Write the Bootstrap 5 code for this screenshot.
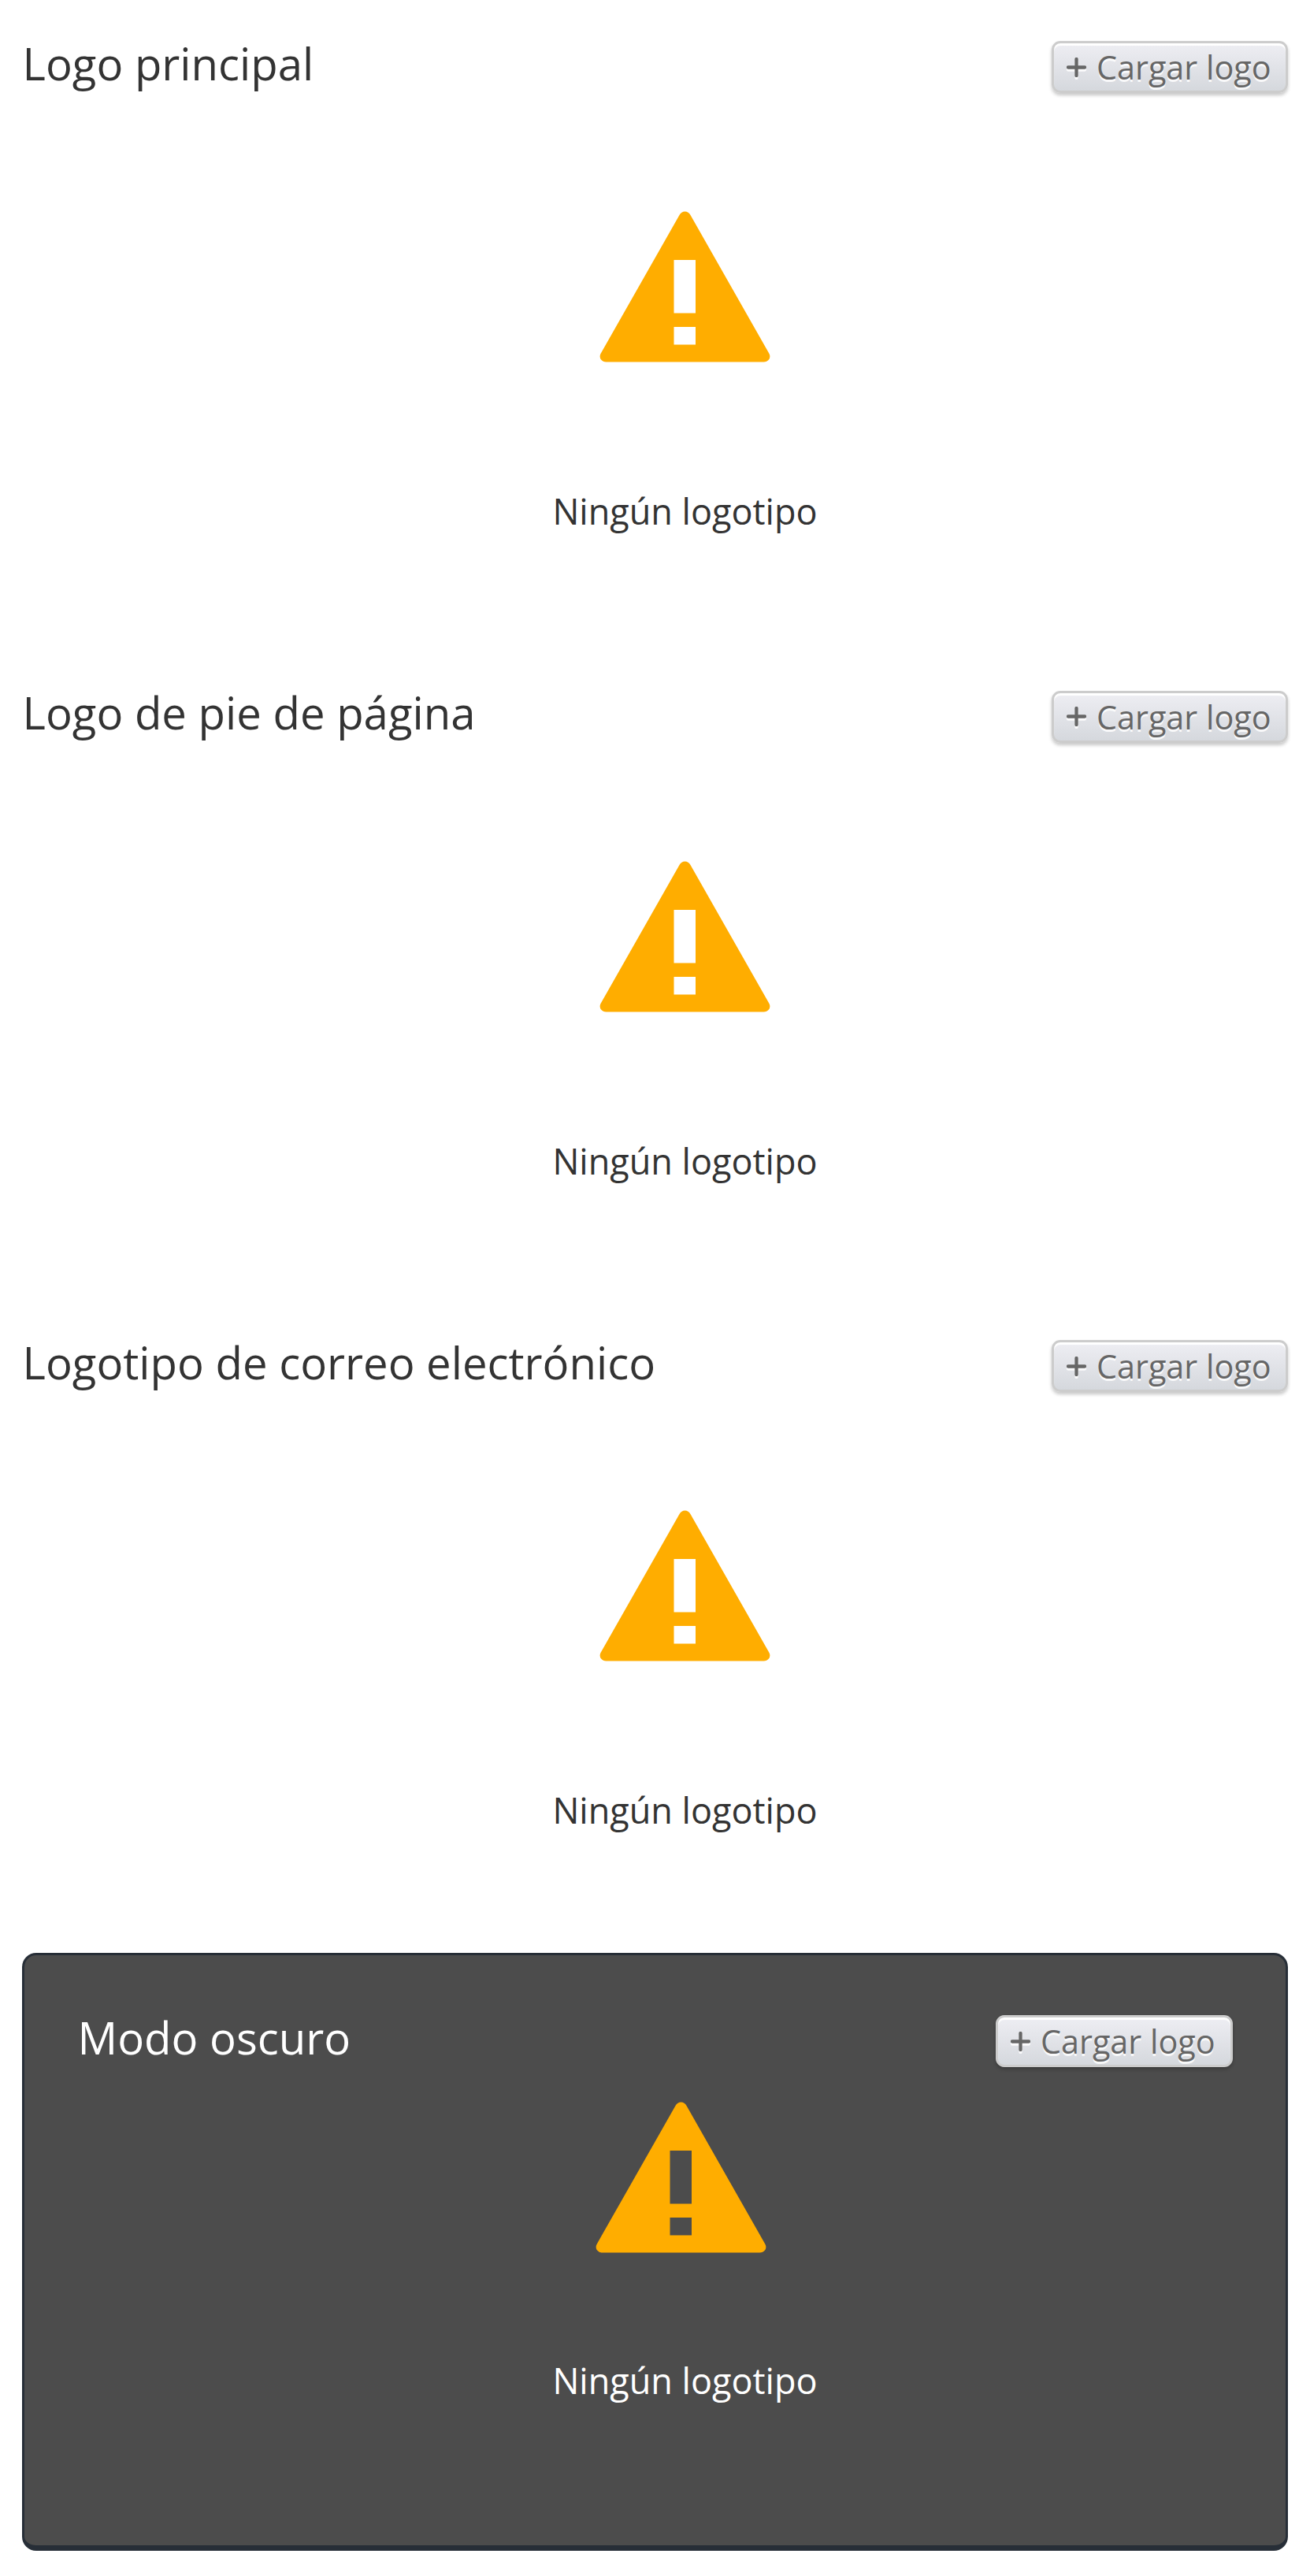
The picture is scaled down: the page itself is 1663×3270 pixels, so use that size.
<!DOCTYPE html>
<html lang="es">
<head>
<meta charset="utf-8">
<meta name="viewport" content="width=device-width, initial-scale=1">
<title>Logotipos</title>
<link href="https://cdn.jsdelivr.net/npm/bootstrap@5.3.0/dist/css/bootstrap.min.css" rel="stylesheet">
<style>
  body { font-family: "Open Sans", sans-serif; color: #333; background: #fff; }
  .logo-page { padding: 0 28px 32px; }
  .logo-section { height: 824.5px; padding-top: 46px; }
  .logo-section:nth-of-type(3) { height: 830px; }
  .logo-title { font-size: 56.3px; line-height: 66px; font-weight: 400; margin-top: .6px; padding-left: .6px; }
  .btn-load {
    height: 66px; width: 300px; margin-top: 6px; padding: 0 0 0 16px;
    border: 3px solid #ccc; border-radius: 11px;
    background: linear-gradient(#eeeef3, #d5d8dd);
    box-shadow: inset 0 3px 1px #fff, 0 3px 4px rgba(0, 0, 0, .22);
    color: #666; font-size: 41.35px; line-height: 60px; text-shadow: 0 3px 0 rgba(255, 255, 255, .85);
  }
  .btn-load svg { width: 25px; height: 25px; margin-right: 13px; filter: drop-shadow(0 3px 0 rgba(255, 255, 255, .85)); }
  .logo-empty { padding: 150px 0 0 76px; }
  .logo-empty svg { width: 217px; height: 192px; }
  .logo-caption { font-size: 45px; line-height: 60px; margin-top: 159px; }
  .dark-panel {
    height: 759px; padding: 70px 67px 0; background: #4c4c4c; color: #fff;
    border: 3px solid #272e37; border-bottom-width: 7px; border-radius: 18px;
  }
  .dark-panel .btn-load { width: 301px; }
  .dark-panel .logo-empty { padding: 44px 0 0 76px; }
  .dark-panel .logo-empty svg { margin-right: 10px; }
  .dark-panel .logo-caption { margin-top: 132px; }
</style>
</head>
<body>
<svg class="d-none" xmlns="http://www.w3.org/2000/svg">
  <symbol id="warning" viewBox="0 0 217 192">
    <path fill="#ffad00" fill-rule="evenodd" d="M101.500 5Q104 .5 108.500 .5Q113 .5 115.500 5L215.500 181Q217.500 185 215 188.500Q212.500 191.500 208.500 191.500H8.500Q4.500 191.500 2 188.500Q-.5 185 1.500 181ZM94.500 62V129.500H122V62ZM94.500 147V169.500H122V147Z"/>
  </symbol>
  <symbol id="plus" viewBox="0 0 25 25">
    <path d="M12.500 2V23M2 12.500H23" stroke="#666" stroke-width="4.300" stroke-linecap="round"/>
  </symbol>
</svg>
<main class="logo-page">
  <section class="logo-section">
    <div class="d-flex justify-content-between align-items-start">
      <h2 class="logo-title mb-0">Logo principal</h2>
      <button type="button" class="btn btn-load d-flex align-items-center"><svg><use href="#plus"/></svg>Cargar logo</button>
    </div>
    <div class="logo-empty d-flex flex-column align-items-center">
      <svg><use href="#warning"/></svg>
      <p class="logo-caption mb-0">Ningún logotipo</p>
    </div>
  </section>
  <section class="logo-section">
    <div class="d-flex justify-content-between align-items-start">
      <h2 class="logo-title mb-0">Logo de pie de página</h2>
      <button type="button" class="btn btn-load d-flex align-items-center"><svg><use href="#plus"/></svg>Cargar logo</button>
    </div>
    <div class="logo-empty d-flex flex-column align-items-center">
      <svg><use href="#warning"/></svg>
      <p class="logo-caption mb-0">Ningún logotipo</p>
    </div>
  </section>
  <section class="logo-section">
    <div class="d-flex justify-content-between align-items-start">
      <h2 class="logo-title mb-0">Logotipo de correo electrónico</h2>
      <button type="button" class="btn btn-load d-flex align-items-center"><svg><use href="#plus"/></svg>Cargar logo</button>
    </div>
    <div class="logo-empty d-flex flex-column align-items-center">
      <svg><use href="#warning"/></svg>
      <p class="logo-caption mb-0">Ningún logotipo</p>
    </div>
  </section>
  <section class="dark-panel">
    <div class="d-flex justify-content-between align-items-start">
      <h2 class="logo-title mb-0">Modo oscuro</h2>
      <button type="button" class="btn btn-load d-flex align-items-center"><svg><use href="#plus"/></svg>Cargar logo</button>
    </div>
    <div class="logo-empty d-flex flex-column align-items-center">
      <svg><use href="#warning"/></svg>
      <p class="logo-caption mb-0">Ningún logotipo</p>
    </div>
  </section>
</main>
<script src="https://cdn.jsdelivr.net/npm/bootstrap@5.3.0/dist/js/bootstrap.bundle.min.js"></script>
</body>
</html>
